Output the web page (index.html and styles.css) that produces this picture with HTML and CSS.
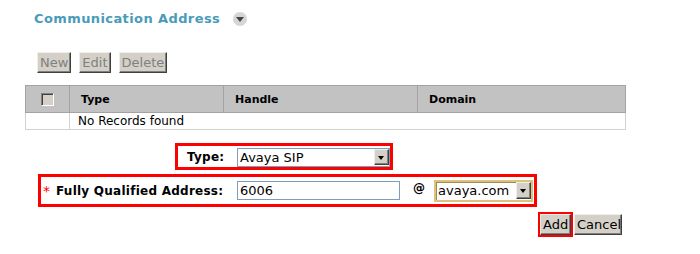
FILE: index.html
```html
<!DOCTYPE html>
<html lang="en">
<head>
  <meta charset="UTF-8" />
  <title>Communication Address</title>
  <link rel="stylesheet" href="styles.css">
</head>
<body>
  <div class="section-title">
    <span class="title-text">Communication Address</span>
    <span class="collapse-icon"></span>
  </div>

  <div class="toolbar">
    <button class="btn btn-disabled">New</button>
    <button class="btn btn-disabled">Edit</button>
    <button class="btn btn-disabled">Delete</button>
  </div>

  <table class="records">
    <thead>
      <tr>
        <th class="col-check"><span class="checkbox"></span></th>
        <th class="col-type">Type</th>
        <th class="col-handle">Handle</th>
        <th class="col-domain">Domain</th>
      </tr>
    </thead>
    <tbody>
      <tr>
        <td></td>
        <td colspan="3">No Records found</td>
      </tr>
    </tbody>
  </table>

  <div class="form">
    <div class="row row-type highlight">
      <label class="label type-label">Type:</label>
      <div class="select type-select">
        <span class="select-text">Avaya SIP</span>
        <span class="select-arrow"></span>
      </div>
    </div>

    <div class="row row-fqa highlight">
      <span class="req">*</span>
      <label class="label fqa-label">Fully Qualified Address:</label>
      <div class="text-input">6006</div>
      <span class="at">@</span>
      <div class="select domain-select">
        <span class="select-text">avaya.com</span>
        <span class="select-arrow"></span>
      </div>
    </div>

    <div class="actions">
      <div class="add-box">
        <button class="btn">Add</button>
      </div>
      <button class="btn cancel-btn">Cancel</button>
    </div>
  </div>
</body>
</html>
```

FILE: styles.css
```css
* {
  box-sizing: border-box;
}

body {
  margin: 0;
  padding-top: 11px;
  font-family: 'DejaVu Sans', Verdana, sans-serif;
  font-size: 12px;
  color: #000;
  background-color: #fff;
}

.section-title {
  display: flex;
  align-items: center;
  margin-left: 34px;
  height: 16px;
}

.title-text {
  font-size: 13px;
  font-weight: bold;
  letter-spacing: 0.4px;
  color: #4a9bb8;
  line-height: 16px;
}

.collapse-icon {
  position: relative;
  width: 14px;
  height: 14px;
  margin-left: 13px;
  border-radius: 50%;
  background-color: #d6d6d6;
}

.collapse-icon::after {
  content: '';
  position: absolute;
  left: 3px;
  top: 5px;
  border-left: 4px solid transparent;
  border-right: 4px solid transparent;
  border-top: 5px solid #444;
}

.btn {
  height: 21px;
  padding: 0 2px;
  font-family: 'DejaVu Sans', Verdana, sans-serif;
  font-size: 13px;
  color: #000;
  background-color: #d4d0c8;
  border: 1px solid;
  border-color: #f0eee8 #404040 #404040 #f0eee8;
  box-shadow: inset -1px -1px 0 #808080;
  border-radius: 0;
  cursor: pointer;
}

.btn-disabled {
  color: #808080;
  cursor: default;
}

.toolbar {
  display: flex;
  gap: 8px;
  margin: 25px 0 0 37px;
}

.records {
  margin: 12px 0 0 25px;
  width: 601px;
  border-collapse: collapse;
}

.records th {
  height: 27px;
  padding: 0 0 0 11px;
  text-align: left;
  font-size: 11px;
  font-weight: bold;
  background-color: #c2c2c2;
  border: 1px solid #a3a3a3;
}

.records td {
  height: 17px;
  padding: 0 0 0 8px;
  border: 1px solid #d2d2d2;
  line-height: 15px;
}

.records .col-check {
  width: 44px;
  padding: 0 0 0 15px;
}

.col-type { width: 154px; }
.col-handle { width: 194px; }

.checkbox {
  display: block;
  width: 13px;
  height: 13px;
  background-color: #d4d0c8;
  border: 1px solid;
  border-color: #808080 #fff #fff #808080;
  box-shadow: inset 1px 1px 0 #404040;
}

.form {
  margin-top: 13px;
}

.row {
  display: flex;
  align-items: center;
}

.highlight {
  border: 3px solid #ff0000;
}

.row-type {
  margin-left: 175px;
  width: 218px;
  height: 27px;
  padding-left: 9px;
}

.row-fqa {
  margin: 4px 0 0 38px;
  width: 499px;
  height: 33px;
  padding-left: 2px;
}

.label {
  font-weight: bold;
  letter-spacing: 0.25px;
}

.type-label {
  width: 50px;
}

.req {
  width: 13px;
  color: #ff0000;
  font-size: 14px;
}

.fqa-label {
  width: 181px;
}

.select {
  display: flex;
  align-items: center;
  justify-content: space-between;
  background-color: #fff;
  border: 1px solid #7f9db9;
  font-size: 13px;
}

.select-text {
  padding-left: 2px;
}

.select-arrow {
  position: relative;
  width: 15px;
  height: 16px;
  background-color: #d4d0c8;
  border: 1px solid;
  border-color: #f0eee8 #404040 #404040 #f0eee8;
  box-shadow: inset -1px -1px 0 #808080;
}

.select-arrow::after {
  content: '';
  position: absolute;
  left: 3px;
  top: 6px;
  border-left: 3px solid transparent;
  border-right: 3px solid transparent;
  border-top: 4px solid #000;
}

.type-select {
  width: 153px;
  height: 19px;
  margin-top: 1px;
}

.text-input {
  width: 163px;
  height: 19px;
  padding-left: 2px;
  border: 1px solid #7f9db9;
  font-size: 13px;
  line-height: 17px;
}

.at {
  width: 21px;
  margin-left: 13px;
  margin-top: -6px;
  font-weight: bold;
}

.domain-select {
  width: 99px;
  height: 22px;
  border: 2px solid #dfc27a;
  box-shadow: inset 1px 1px 0 #9a8a60;
}

.domain-select .select-arrow {
  height: 17px;
  margin-right: 0;
}

.actions {
  display: flex;
  align-items: center;
  margin: 5px 0 0 538px;
}

.add-box {
  display: flex;
  padding: 0;
  border: 2px solid #ff0000;
}

.add-box .btn {
  width: 31px;
}

.cancel-btn {
  width: 48px;
  margin-left: 1px;
}
```
